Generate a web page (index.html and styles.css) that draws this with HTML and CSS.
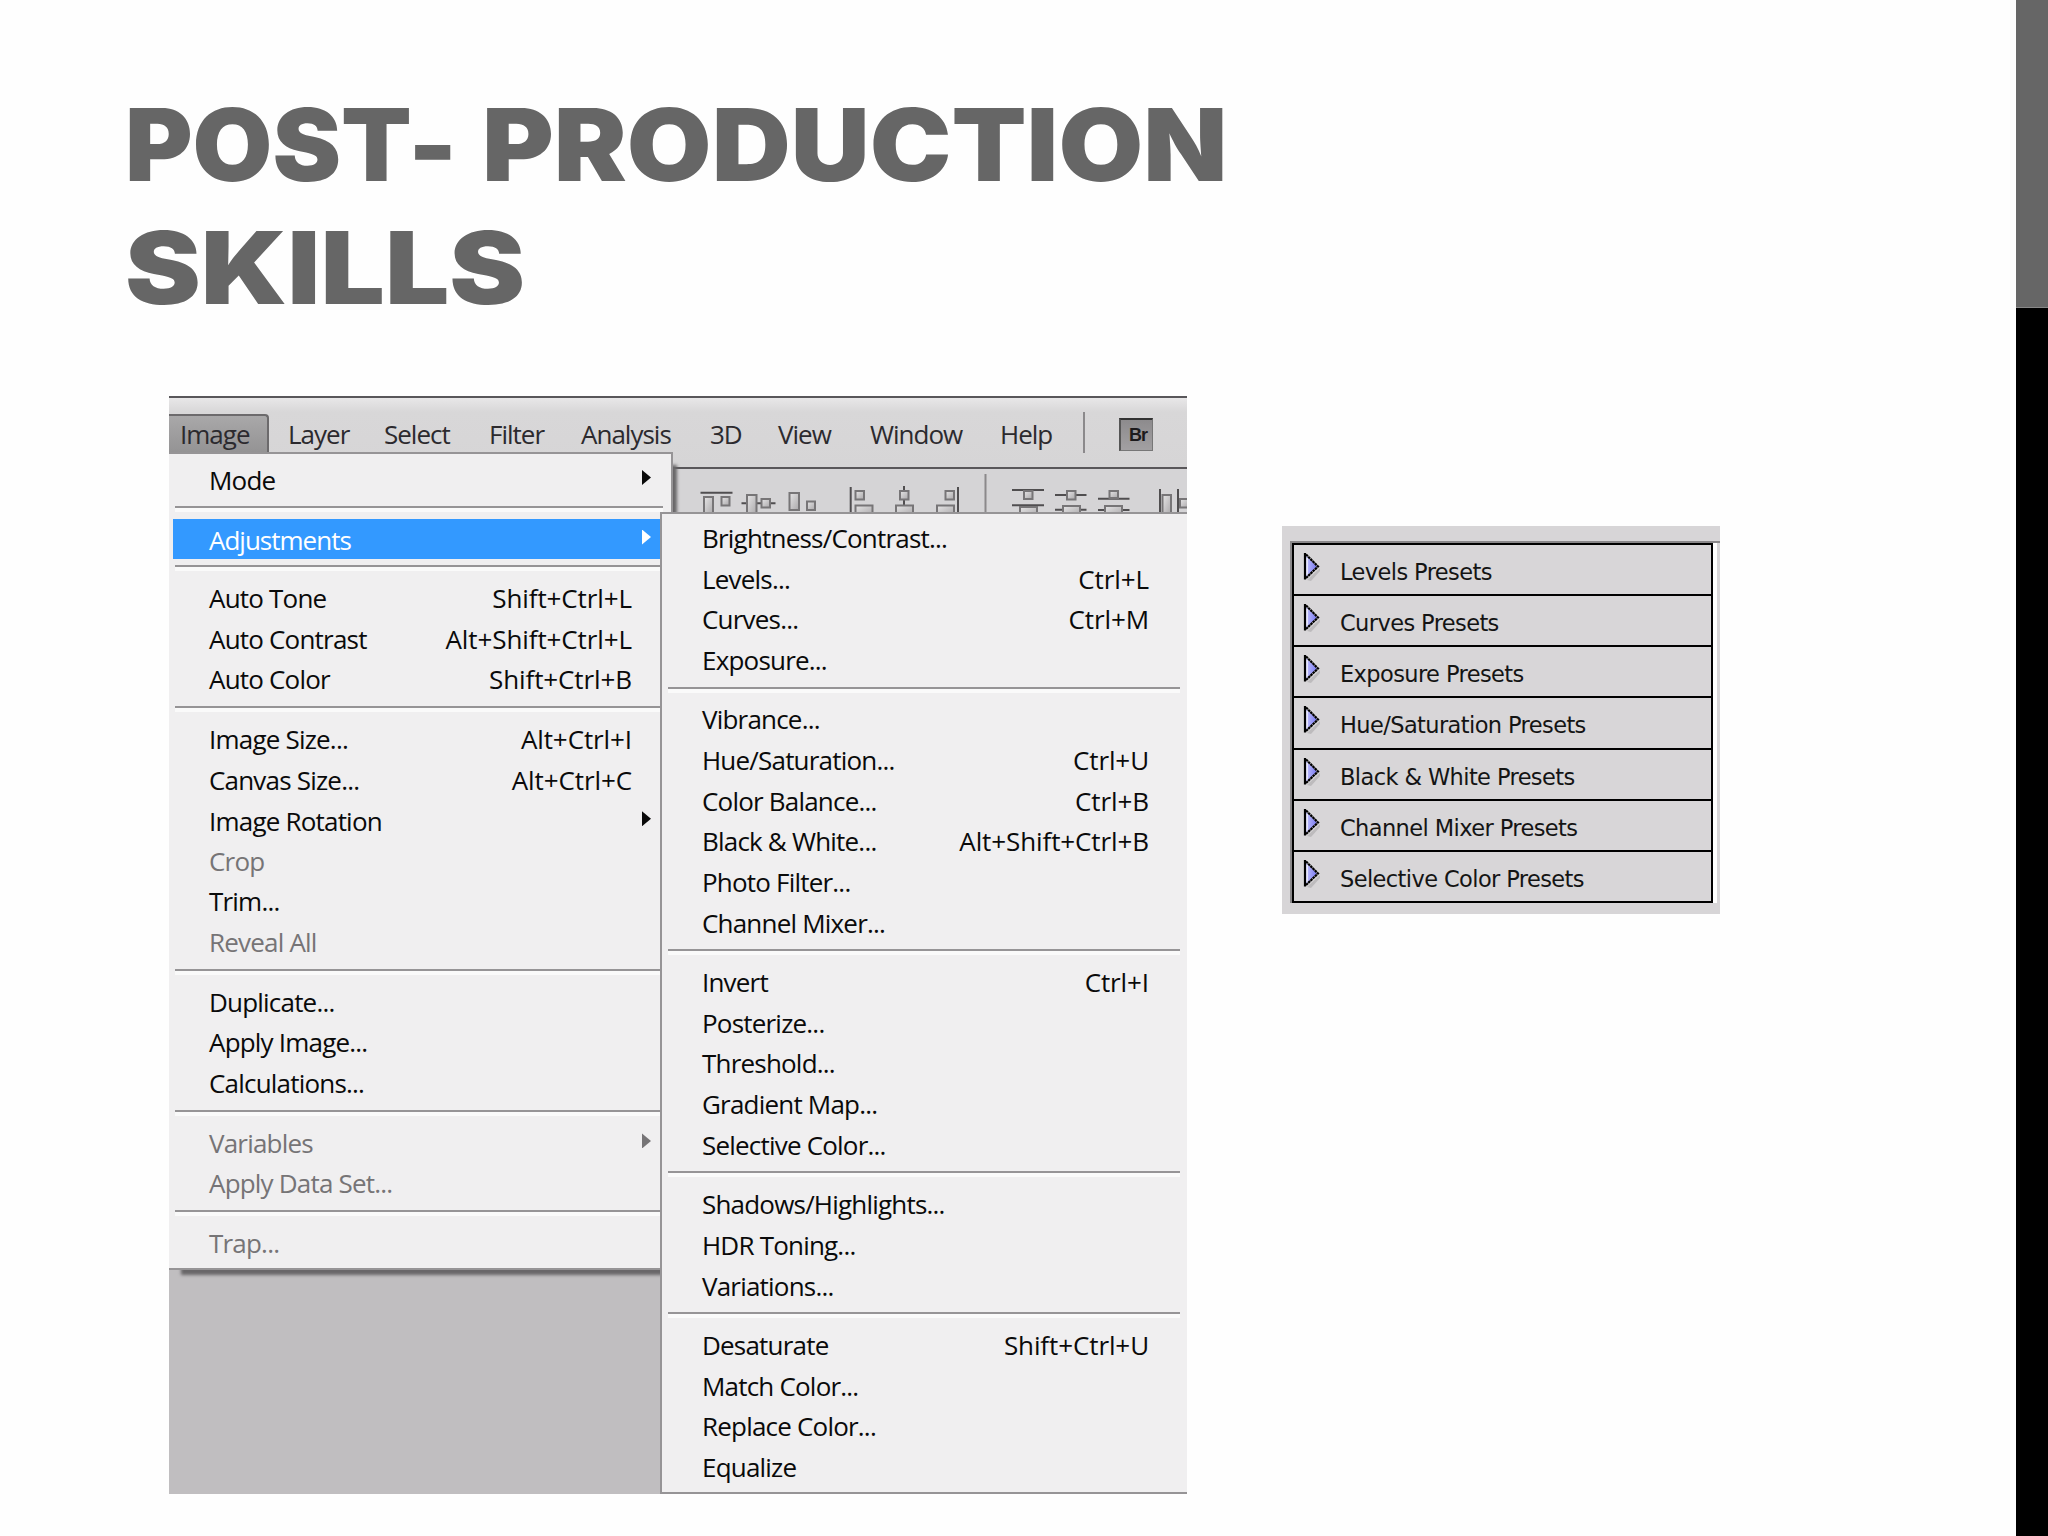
FILE: index.html
```
<!DOCTYPE html>
<html>
	<head>
		<meta charset="UTF-8">
		<title>Post- Production Skills</title>
		<link rel="stylesheet" href="styles.css">
	</head>
	<body>
		<div class="slide">
			<div class="content">
				<h1><span class="post">POST-</span> <span class="production">PRODUCTION</span> <span class="skills">SKILLS</span></h1>
				<div class="figures">
					<div class="shot">
						<div class="menubar">
							<span class="open">Image</span>
							<span>Layer</span>
							<span>Select</span>
							<span>Filter</span>
							<span>Analysis</span>
							<span>3D</span>
							<span>View</span>
							<span>Window</span>
							<span>Help</span>
							<i class="divider"></i>
							<b class="bridge">Br</b>
						</div>
						<div class="options">
							<svg width="511" height="44" viewBox="676 470 511 44">
								<defs>
									<linearGradient id="face" x1="0" y1="0" x2="1" y2="1">
										<stop offset="0" stop-color="#e6e5e6"/>
										<stop offset="1" stop-color="#a9a7a9"/>
									</linearGradient>
								</defs>
								<!-- guide lines -->
								<path class="guide" d="M700.5 493.7H732.5M741.5 504.3H775.5M850.7 488V514M904 487V514M958 488V514M1012 491H1044M1012 506.3H1044M1055 496H1086.5M1055 510.7H1086.5M1098 499.7H1129.5M1098 511H1129.5M1160 490V514M1178 490V514"/>
								<path class="split" d="M985.5 475V514"/>
								<!-- boxes -->
								<g class="box">
									<rect x="704" y="498" width="9" height="18"/>
									<rect x="721.5" y="498" width="8" height="8.5"/>
									<rect x="747" y="496" width="9.5" height="20"/>
									<rect x="761.5" y="500" width="8.5" height="8.5"/>
									<rect x="789.5" y="494" width="9.5" height="17"/>
									<rect x="807" y="502.5" width="8" height="8.5"/>
									<rect x="855.5" y="492" width="8.5" height="8.5"/>
									<rect x="855.5" y="506.5" width="17" height="10"/>
									<rect x="900" y="492" width="8.5" height="8.5"/>
									<rect x="896" y="506.5" width="17" height="10"/>
									<rect x="945.5" y="492" width="8.5" height="8.5"/>
									<rect x="937" y="506.5" width="17" height="10"/>
									<rect x="1024" y="492" width="8.5" height="8"/>
									<rect x="1020" y="508" width="17" height="10"/>
									<rect x="1067" y="492" width="8.5" height="8.5"/>
									<rect x="1063" y="507" width="17" height="10"/>
									<rect x="1109.5" y="492" width="8.5" height="7"/>
									<rect x="1105" y="507" width="17" height="10"/>
									<rect x="1162.5" y="496" width="8.5" height="20"/>
									<rect x="1180" y="500" width="9" height="8.5"/>
								</g>
							</svg>
						</div>
						<ul class="menu image_menu">
							<li class="sub">Mode</li>
							<li class="sep short"></li>
							<li class="sub active_li">Adjustments</li>
							<li class="sep"></li>
							<li>Auto Tone<em>Shift+Ctrl+L</em></li>
							<li>Auto Contrast<em>Alt+Shift+Ctrl+L</em></li>
							<li>Auto Color<em>Shift+Ctrl+B</em></li>
							<li class="sep"></li>
							<li>Image Size...<em>Alt+Ctrl+I</em></li>
							<li>Canvas Size...<em>Alt+Ctrl+C</em></li>
							<li class="sub">Image Rotation</li>
							<li class="off">Crop</li>
							<li>Trim...</li>
							<li class="off">Reveal All</li>
							<li class="sep"></li>
							<li>Duplicate...</li>
							<li>Apply Image...</li>
							<li>Calculations...</li>
							<li class="sep"></li>
							<li class="sub off">Variables</li>
							<li class="off">Apply Data Set...</li>
							<li class="sep"></li>
							<li class="off">Trap...</li>
						</ul>
						<ul class="menu adjust_menu">
							<li>Brightness/Contrast...</li>
							<li>Levels...<em>Ctrl+L</em></li>
							<li>Curves...<em>Ctrl+M</em></li>
							<li>Exposure...</li>
							<li class="sep"></li>
							<li>Vibrance...</li>
							<li>Hue/Saturation...<em>Ctrl+U</em></li>
							<li>Color Balance...<em>Ctrl+B</em></li>
							<li>Black &amp; White...<em>Alt+Shift+Ctrl+B</em></li>
							<li>Photo Filter...</li>
							<li>Channel Mixer...</li>
							<li class="sep"></li>
							<li>Invert<em>Ctrl+I</em></li>
							<li>Posterize...</li>
							<li>Threshold...</li>
							<li>Gradient Map...</li>
							<li>Selective Color...</li>
							<li class="sep"></li>
							<li>Shadows/Highlights...</li>
							<li>HDR Toning...</li>
							<li>Variations...</li>
							<li class="sep"></li>
							<li>Desaturate<em>Shift+Ctrl+U</em></li>
							<li>Match Color...</li>
							<li>Replace Color...</li>
							<li>Equalize</li>
						</ul>
					</div>
					<div class="presets">
						<svg class="defs" width="0" height="0">
							<defs>
								<linearGradient id="lilac" x1="0" y1="0" x2="1" y2="0">
									<stop offset="0" stop-color="#c8c8ff"/>
									<stop offset="1" stop-color="#7878f0"/>
								</linearGradient>
								<symbol id="tri" viewBox="0 0 20 32">
									<path d="M4 28L17 16V19L8 29Z" fill="#bdbbbd"/>
									<path d="M2 3L14 14.5L2 26Z" fill="url(#lilac)"/>
									<path d="M4 6V23" stroke="#f4f4ff" stroke-width="1.500"/>
									<path d="M2 1V27.5" stroke="#000" stroke-width="2.2"/>
									<path d="M3 2.500L15 14.500L3 26" fill="none" stroke="#000" stroke-width="2.200" stroke-dasharray="2.600 .5"/>
								</symbol>
							</defs>
						</svg>
						<ul>
							<li><svg><use href="#tri"/></svg>Levels Presets</li>
							<li><svg><use href="#tri"/></svg>Curves Presets</li>
							<li><svg><use href="#tri"/></svg>Exposure Presets</li>
							<li><svg><use href="#tri"/></svg>Hue/Saturation Presets</li>
							<li><svg><use href="#tri"/></svg>Black &amp; White Presets</li>
							<li><svg><use href="#tri"/></svg>Channel Mixer Presets</li>
							<li><svg><use href="#tri"/></svg>Selective Color Presets</li>
						</ul>
					</div>
				</div>
			</div>
			<div class="side"></div>
		</div>
	</body>
</html>
```
FILE: styles.css
```
html,body,div,ul,li,h1{margin: 0; padding: 0;}
ul,li{list-style: none;}
*{box-sizing: border-box;}
.slide{
	width: 2048px;
	height: 1536px;
	display: flex;
	background: #fefefe;
	overflow: hidden;
}
.content{
	width: 2016px;
	padding: 83px 0 0 125px;
}
.side{
	width: 32px;
	height: 1536px;
	background: #000;
}
.side::before{
	content: "";
	display: block;
	height: 307px;
	background: #666;
	border-bottom: 1px solid #888;
}
h1{
	height: 313px;
	display: grid;
	grid-template-columns: 357px 800px;
	grid-auto-rows: 123px;
	font: 900 100px/123px Inter, "Liberation Sans", sans-serif;
	font-feature-settings: "calt" 0;
	color: #666;
	white-space: nowrap;
}
h1 span{
	justify-self: start;
	transform-origin: 0 0;
}
.post{
	transform: scaleX(1.03);
}
.production{
	transform: scaleX(1.094);
}
.skills{
	transform: scaleX(1.139);
}
.figures{
	display: flex;
	align-items: flex-start;
}
/* menu window */
.shot{
	position: relative;
	width: 1018px;
	height: 1098px;
	margin-left: 44px;
	background: #c0bec0;
	border-top: 2px solid #59575a;
	overflow: hidden;
	font: 26px/40.65px "Open Sans", "Noto Sans", sans-serif;
	color: #0a0a0a;
	letter-spacing: -0.8px;
}
.menubar{
	height: 69px;
	padding-top: 16px;
	display: grid;
	grid-template-columns: 119px 96px 105px 92px 129px 68px 92px 130px 83px 36px 34px;
	background: linear-gradient(#e8e7e8, #d8d7d8 14px, #d6d5d6);
	color: #2c2a2e;
	letter-spacing: -1px;
}
.menubar span{
	height: 40px;
	line-height: 41px;
}
.menubar .open{
	width: 100px;
	padding-left: 11px;
	background: linear-gradient(#a9a8a9, #939293);
	border-top: 2px solid #6c6a6c;
	border-right: 2px solid #6c6a6c;
	border-radius: 0 4px 0 0;
	line-height: 37px;
}
.divider{
	width: 2px;
	height: 41px;
	margin-top: -2px;
	background: #8b898b;
}
.bridge{
	width: 34px;
	height: 33px;
	margin-top: 4px;
	padding-left: 8px;
	background: linear-gradient(#8d8b8d, #a2a0a2);
	border: 1px solid #777;
	border-top: 2px solid #333;
	border-left: 2px solid #555;
	font: bold 18px/31px "Liberation Sans", sans-serif;
	color: #1c1a1c;
}
.options{
	height: 46px;
	padding-left: 507px;
	background: #d5d4d6;
	border-top: 2px solid #59575a;
}
.guide{
	fill: none;
	stroke: #504e50;
	stroke-width: 2;
}
.split{
	stroke: #8b898b;
	stroke-width: 2;
}
.box rect{
	fill: url(#face);
	stroke: #777577;
	stroke-width: 2;
}
.menu{
	position: absolute;
	background: #f0eff0;
}
.image_menu{
	left: 0;
	top: 54px;
	width: 504px;
	height: 818px;
	padding-top: 5px;
	border: 2px solid #969496;
	border-left: 0;
	box-shadow: 8px 9px 3px -4px #696769;
}
.adjust_menu{
	left: 491px;
	top: 114px;
	width: 540px;
	height: 982px;
	padding-top: 3px;
	border: 2px solid #969496;
}
.menu li{
	height: 40.65px;
	display: flex;
	justify-content: space-between;
}
.image_menu li{
	margin-left: 4px;
	padding: 0 39px 0 36px;
}
.adjust_menu li{
	padding: 0 49px 0 40px;
	line-height: 42.5px;
}
.menu em{
	font-style: normal;
	letter-spacing: -0.1px;
}
.menu .sub{
	padding-right: 20px;
	line-height: 43.5px;
}
.sub::after{
	content: "";
	width: 9px;
	height: 15px;
	margin-top: 11px;
	background: currentColor;
	clip-path: polygon(0 0, 100% 50%, 0 100%);
}
.menu .active_li{
	background: #3399ff;
	color: #fff;
	letter-spacing: -1px;
}
.menu .off{
	color: #767476;
}
.menu .sep{
	height: 18.9px;
	padding: 0;
}
.sep::before{
	content: "";
	flex: 1;
	height: 4px;
	margin-top: 7px;
	background: #fafafa;
	border-top: 2px solid #969496;
}
.image_menu .sep{
	margin: 0 8px 0 6px;
}
.image_menu .sep::before{
	margin-top: 6px;
}
.adjust_menu .sep{
	margin: 0 18px 0 6px;
}
/* presets list */
.presets{
	width: 438px;
	height: 388px;
	margin: 130px 0 0 95px;
	padding: 15px 0 0 8px;
	background: #d7d5d7;
}
.defs{
	display: block;
}
.presets ul{
	width: 430px;
	padding: 0 7px 0 0;
	border-top: 2px solid #8a888a;
	border-left: 2px solid #8a888a;
	background: linear-gradient(#fff, #fff) right 3px top 0 / 4px 100% no-repeat;
}
.presets li{
	height: 51.15px;
	display: flex;
	padding-left: 10px;
	border: 2px solid #000;
	border-bottom: 0;
	background: #d8d6d8;
	font: 22.5px/54px "DejaVu Sans", sans-serif;
	color: #141414;
	letter-spacing: -0.6px;
}
.presets li:last-child{
	height: 53px;
	border-bottom: 2px solid #000;
}
.presets li svg{
	width: 20px;
	height: 32px;
	margin: 7px 17px 0 -1px;
}
```
